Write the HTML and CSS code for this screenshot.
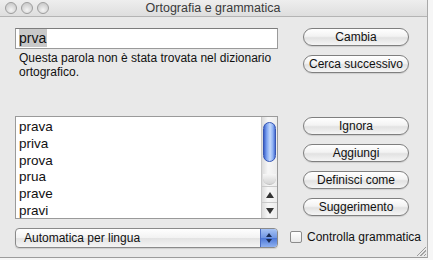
FILE: index.html
```html
<!DOCTYPE html>
<html lang="it">
<head>
  <meta charset="UTF-8">
  <title>Ortografia e grammatica</title>
  <link rel="stylesheet" href="styles.css">
</head>
<body>
  <div class="window">
    <div class="titlebar">
      <div class="lights">
        <span class="light"></span>
        <span class="light"></span>
        <span class="light"></span>
      </div>
      <div class="title">Ortografia e grammatica</div>
    </div>

    <div class="content">
      <div class="top-left">
        <div class="field"><span class="sel">prva</span></div>
        <p class="message">Questa parola non è stata trovata nel dizionario<br>ortografico.</p>
      </div>
      <div class="top-right">
        <button class="btn">Cambia</button>
        <button class="btn">Cerca successivo</button>
      </div>

      <div class="list">
        <ul class="words">
          <li>prava</li>
          <li>priva</li>
          <li>prova</li>
          <li>prua</li>
          <li>prave</li>
          <li>pravi</li>
        </ul>
        <div class="scrollbar">
          <div class="track">
            <div class="thumb"></div>
            <div class="cap"></div>
          </div>
          <div class="arrow up"><span class="tri-up"></span></div>
          <div class="arrow down"><span class="tri-down"></span></div>
        </div>
      </div>
      <div class="mid-right">
        <button class="btn">Ignora</button>
        <button class="btn">Aggiungi</button>
        <button class="btn">Definisci come</button>
        <button class="btn">Suggerimento</button>
      </div>

      <div class="popup">
        <span class="popup-label">Automatica per lingua</span>
        <span class="popup-arrows">
          <span class="tri-up small"></span>
          <span class="tri-down small"></span>
        </span>
      </div>
      <label class="check">
        <span class="box"></span>
        Controlla grammatica
      </label>
    </div>
    <div class="grip"></div>
  </div>
</body>
</html>
```

FILE: styles.css
```css
html, body {
  margin: 0;
  width: 433px;
  height: 260px;
  overflow: hidden;
  background: #f6f6f6;
  font-family: 'Liberation Sans', Arial, sans-serif;
  color: #111;
}

.window {
  position: relative;
  width: 427px;
  height: 257px;
  background: #e9e9e9;
  border-right: 1px solid #a9a9a9;
  border-bottom: 1px solid #9c9c9c;
}

.titlebar {
  height: 16px;
  background: linear-gradient(#eeeeee, #dedede);
  border-bottom: 1px solid #b4b4b4;
  display: flex;
  align-items: center;
}

.lights {
  display: flex;
  gap: 4px;
  padding-left: 5px;
  width: 60px;
}

.light {
  width: 10px;
  height: 10px;
  border-radius: 50%;
  border: 1px solid #9d9d9d;
  background: radial-gradient(circle at 50% 70%, #f4f4f4, #cfcfcf 70%);
}

.title {
  flex: 1;
  text-align: center;
  font-size: 12.5px;
  color: #3a3a3a;
  padding-right: 66px;
}

.content {
  display: grid;
  grid-template-columns: 263px 106px;
  grid-template-rows: 88px 103px 28px;
  column-gap: 25px;
  padding: 11px 0 0 15px;
}

.field {
  height: 19px;
  background: #fff;
  border: 1px solid #9a9a9a;
  border-top-color: #7c7c7c;
  width: 258px;
  font-size: 14px;
  line-height: 19px;
  padding-left: 3px;
}

.sel {
  background: #c9c9c9;
  padding: 1px 1px 1px 0;
}

.message {
  margin: 2px 0 0 4px;
  font-size: 12px;
  line-height: 14px;
  white-space: nowrap;
  color: #111;
}

.top-right, .mid-right {
  display: flex;
  flex-direction: column;
}

.top-right { gap: 9px; }
.mid-right { gap: 9px; padding-top: 1px; }

.btn {
  height: 18px;
  width: 106px;
  padding: 0;
  border: 1px solid #7f7f7f;
  border-radius: 9px;
  background: linear-gradient(#ffffff, #f3f3f3 45%, #e2e2e2 55%, #f5f5f5);
  font-family: inherit;
  font-size: 12px;
  color: #111;
  box-shadow: 0 1px 1px rgba(0,0,0,0.12);
}

.list {
  display: flex;
  background: #fff;
  border: 1px solid #9a9a9a;
  width: 261px;
  height: 101px;
}

.words {
  list-style: none;
  margin: 0;
  padding: 2px 0 0 3px;
  flex: 1;
  font-size: 13.5px;
}

.words li {
  height: 16.8px;
  line-height: 16.8px;
}

.scrollbar {
  width: 15px;
  display: flex;
  flex-direction: column;
  background: linear-gradient(90deg, #dcdcdc, #f7f7f7 40%, #ececec);
  border-left: 1px solid #c8c8c8;
}

.track {
  flex: 1;
  padding: 5px 1px 0 1px;
}

.thumb {
  height: 40px;
  border-radius: 7px;
  background: linear-gradient(90deg, #3e62c8, #7ea4f2 25%, #c3d8fb 55%, #8fb2f4 80%, #4a6fd2);
  border: 1px solid #3656b4;
  box-sizing: border-box;
}

.cap {
  margin-top: 12px;
  height: 10px;
  border-radius: 0 0 7px 7px;
  background: linear-gradient(#f6f6f6, #d4d4d4);
  border-bottom: 1px solid #bdbdbd;
}

.arrow {
  height: 15px;
  display: flex;
  align-items: center;
  justify-content: center;
  border-top: 1px solid #c9c9c9;
}

.tri-up {
  width: 0;
  height: 0;
  border-left: 4px solid transparent;
  border-right: 4px solid transparent;
  border-bottom: 6px solid #333;
}

.tri-down {
  width: 0;
  height: 0;
  border-left: 4px solid transparent;
  border-right: 4px solid transparent;
  border-top: 6px solid #333;
}

.popup {
  margin-top: 9px;
  height: 18px;
  width: 261px;
  display: flex;
  border: 1px solid #8a8a8a;
  border-radius: 4px;
  overflow: hidden;
  background: linear-gradient(#ffffff, #f2f2f2 50%, #e3e3e3 52%, #f4f4f4);
  box-shadow: 0 1px 1px rgba(0,0,0,0.12);
}

.popup-label {
  flex: 1;
  font-size: 12px;
  line-height: 18px;
  padding-left: 8px;
}

.popup-arrows {
  width: 16px;
  display: flex;
  flex-direction: column;
  align-items: center;
  justify-content: center;
  gap: 2px;
  background: linear-gradient(#a7c3f4, #6f95e3 50%, #4d78d8 52%, #8fb1f0);
  border-left: 1px solid #4a6cc4;
}

.tri-up.small {
  border-left-width: 3px;
  border-right-width: 3px;
  border-bottom-width: 4px;
  border-bottom-color: #1a2c55;
}

.tri-down.small {
  border-left-width: 3px;
  border-right-width: 3px;
  border-top-width: 4px;
  border-top-color: #1a2c55;
}

.check {
  margin: 11px 0 0 -13px;
  display: flex;
  align-items: center;
  gap: 5px;
  font-size: 12px;
  white-space: nowrap;
  height: 14px;
}

.box {
  flex-shrink: 0;
  width: 10px;
  height: 10px;
  border: 1px solid #8b8b8b;
  border-radius: 2px;
  background: linear-gradient(#ffffff, #e9e9e9);
}

.grip {
  position: absolute;
  right: 1px;
  bottom: 1px;
  width: 9px;
  height: 9px;
  background: linear-gradient(135deg, transparent 45%, #9b9b9b 46%, #9b9b9b 52%, transparent 53%, transparent 65%, #9b9b9b 66%, #9b9b9b 72%, transparent 73%, transparent 85%, #9b9b9b 86%, #9b9b9b 92%, transparent 93%);
}
```
